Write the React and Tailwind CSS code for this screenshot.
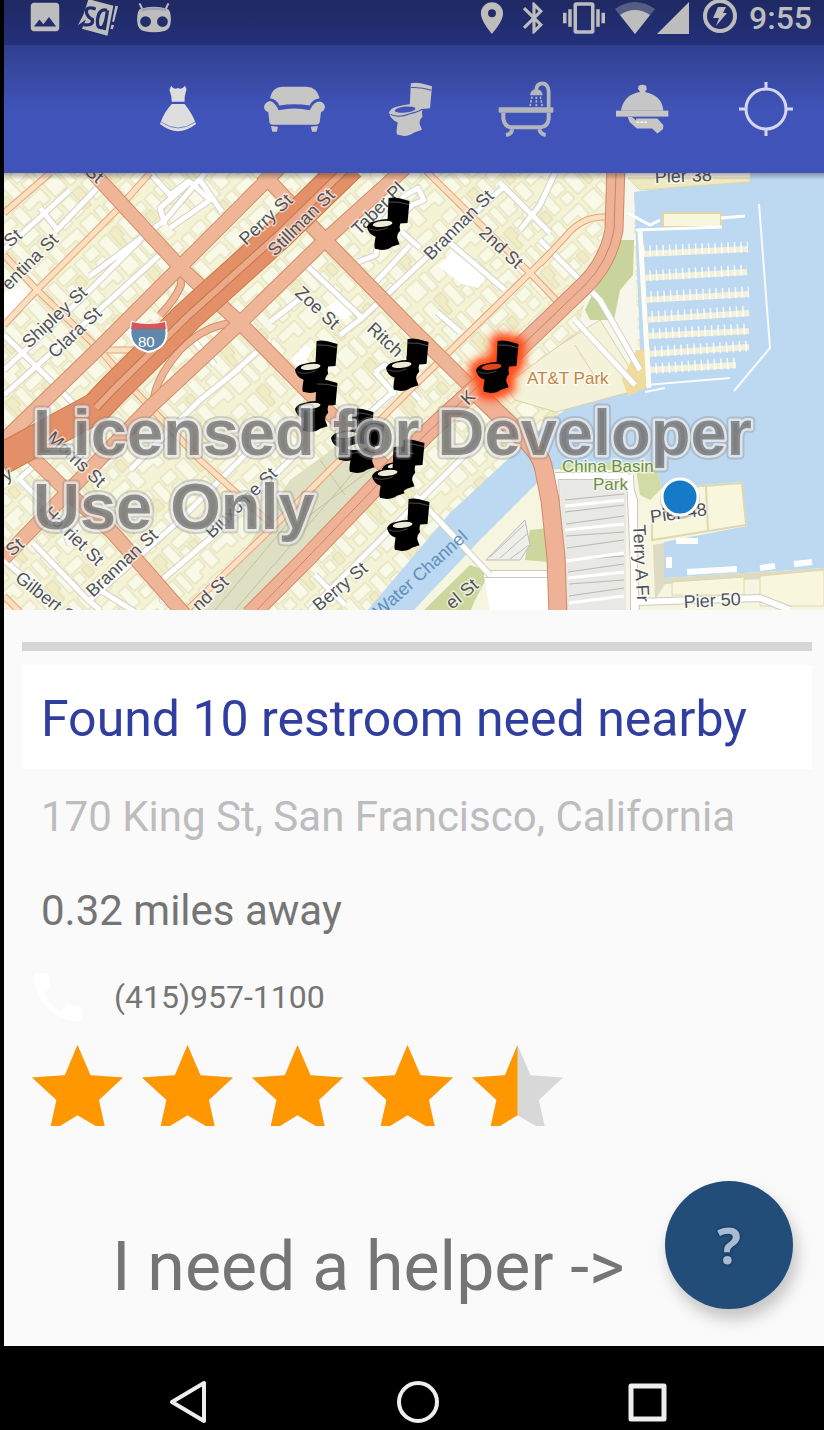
import { MdImage, MdLocationOn, MdBluetooth, MdVibration, MdPhone } from 'react-icons/md';

const TOILET =
  'M65 3Q80 0 98 4L128 12L122 78L100 80Q96 92 100 102Q90 112 91 124L98 142L75 150Q62 160 44 160L24 156Q20 150 26 120Q4 112 0 90Q6 78 20 74L45 68L62 66Z';

// Pines del mapa (esquina superior izquierda de cada uno)
const PINS = [
  { x: 367, y: 197 },
  { x: 295, y: 340 },
  { x: 386, y: 338 },
  { x: 295, y: 379 },
  { x: 331, y: 408 },
  { x: 342, y: 420 },
  { x: 382, y: 439 },
  { x: 372, y: 446 },
  { x: 387, y: 498 },
];

const STREET_LABELS = [
  { t: 'Perry St', x: 246, y: 246, r: -43 },
  { t: 'Stillman St', x: 275, y: 257, r: -45 },
  { t: 'Taber Pl', x: 359, y: 236, r: -45 },
  { t: 'Brannan St', x: 431, y: 261, r: -45 },
  { t: '2nd St', x: 478, y: 234, r: 43 },
  { t: 'Zoe St', x: 294, y: 294, r: 43 },
  { t: 'Ritch St', x: 366, y: 330, r: 43 },
  { t: 'Shipley St', x: 29, y: 349, r: -43 },
  { t: 'Clara St', x: 55, y: 359, r: -43 },
  { t: 'entina St', x: 9, y: 291, r: -45 },
  { t: 'St', x: 10, y: 248, r: -40 },
  { t: 'St', x: 84, y: 173, r: 40 },
  { t: 'Morris St', x: 46, y: 439, r: 43 },
  { t: 'Harriet St', x: 42, y: 514, r: 44 },
  { t: 'Gilbert St', x: 14, y: 580, r: 38 },
  { t: 'Brannan St', x: 93, y: 598, r: -43 },
  { t: 'Bluxome St', x: 212, y: 539, r: -44 },
  { t: 'nd St', x: 199, y: 612, r: -43 },
  { t: 'St', x: 12, y: 557, r: -40 },
  { t: 'y', x: 6, y: 482, r: -30 },
  { t: 'Berry St', x: 319, y: 612, r: -40 },
  { t: 'K', x: 468, y: 406, r: -45 },
  { t: 'el St', x: 452, y: 610, r: -40 },
  { t: 'Pier 38', x: 655, y: 183, r: -2 },
  { t: 'Pier 48', x: 651, y: 523, r: -8 },
  { t: 'Pier 50', x: 684, y: 608, r: -3 },
  { t: 'Terry A Fr', x: 633, y: 525, r: 87 },
];

const MINOR_STREETS = [
  'M4 250L70 190', 'M40 208L56 228', 'M55 232L100 185', 'M90 276L165 220L205 173', 'M4 370L80 300L140 240',
  'M4 395L75 332L165 250', 'M150 173L170 195L190 180', 'M165 225L160 208L190 182L210 200L170 228', 'M200 180L222 212',
  'M230 376L270 340', 'M270 322L305 295', 'M306 265L362 318L445 240L506 185', 'M333 235L360 210', 'M358 262L376 255L378 240L412 205L424 200L418 188L404 196L372 235',
  'M375 283L410 245', 'M340 335L362 318', 'M402 232L420 248', 'M437 312L460 332', 'M500 183L550 233', 'M450 243L505 290',
  'M240 368L200 400L130 470', 'M18 480L35 465M20 480L60 520L70 545', 'M33 543L88 600L100 610', 'M4 560L50 600', 'M90 600L180 520L260 440',
  'M168 586L162 600L185 612M162 580L220 530L300 450', 'M100 590L135 612', 'M375 372L385 365L420 400M375 372L395 395', 'M4 335L50 380L90 420', 'M180 325L215 365', 'M395 390L340 440',
  'M310 610L410 510L480 440', 'M315 575L345 605', 'M415 495L490 575', 'M555 173L540 205L520 230', 'M540 240L600 300L640 370', 'M575 320L635 385',
];

const LIGHT_ROADS = [
  'M4 213L50 173', 'M150 173L117 210L37 290L4 325', 'M4 255L37 290L100 350L130 385', 'M420 165L530 273L556 300', 'M550 253L530 273L410 390L270 530L185 612',
  'M606 217Q582 216 566 236L540 264', 'M132 388L200 460L272 525', 'M100 350L145 350', 'M4 596L20 612',
];

const MAJOR_ROADS = [
  'M86 165L180 267L240 323L303 387L337 420L385 467', 'M262 173L325 240L413 330L480 396', 'M30 455L73 497L113 533L185 615', 'M282 165L180 267L97 350L4 440',
  'M405 168L325 240L240 323L150 407L67 493L4 558',
];

const RAMPS = ['M180 267L181 285Q175 300 160 315', 'M245 323Q210 320 180 350Q150 385 154 410'];

function Toilet({ className, seat }) {
  return (
    <svg viewBox="0 0 128 160" className={className} aria-hidden="true">
      <path d={TOILET} fill="currentColor" />
      <path d="M66 16Q96 14 126 24" fill="none" stroke={seat} strokeWidth="3" />
      <ellipse cx="48" cy="82" rx="31" ry="9" fill={seat} transform="rotate(-6 46 82)" />
      <path d="M4 96Q30 108 62 94Q90 88 100 80" fill="none" stroke={seat} strokeWidth="3" />
    </svg>
  );
}

function Pin({ x, y, hot }) {
  return (
    <g transform={`translate(${x} ${y}) scale(0.332)`}>
      {hot && <path d={TOILET} fill="#ff4a12" stroke="#ff4a12" strokeWidth="44" strokeLinejoin="round" filter="url(#glow)" />}
      <path d={TOILET} fill="#000" />
      <path d="M66 15Q96 13 126 23" fill="none" stroke="#777" strokeWidth="2" />
      <ellipse cx="47" cy="81" rx="30" ry="9" fill={hot ? '#e2441a' : '#ecebd8'} transform="rotate(-6 47 81)" />
      <path d="M6 96Q30 106 62 93" fill="none" stroke="#666" strokeWidth="2" />
    </g>
  );
}

function StatusBar() {
  return (
    <div className="flex h-[45px] items-start justify-between bg-linear-to-b from-[#1f2962] to-[#24307a] pl-[26px] pr-3 text-[#bdbdbd]">
      <div className="flex h-[34px] items-center gap-[18px]">
        <MdImage className="-m-1 size-[38px]" />
        <svg viewBox="240 0 122 112" className="h-[37px] w-10" fill="currentColor" aria-hidden="true">
          <path d="M272 0L348 20L330 112L252 90L264 62L240 80L256 48Z" />
          <g fill="none" stroke="#212c6c" strokeWidth="10">
            <path d="M294 30Q262 20 266 42Q270 56 284 62Q288 82 256 78" />
            <path d="M328 34Q304 28 300 60Q296 92 314 86Q324 80 330 34L320 94" />
          </g>
          <path d="M354 20L362 22L350 70L344 68ZM342 78L350 80L346 92L339 90Z" />
        </svg>
        <svg viewBox="415 4 104 92" className="h-[31px] w-9" aria-hidden="true">
          <path d="M424 8L432 24M510 8L502 24" stroke="currentColor" strokeWidth="6" />
          <path d="M428 24Q467 12 506 24Q518 28 517 60Q516 86 498 90Q467 97 436 90Q418 86 417 60Q416 28 428 24Z" fill="currentColor" />
          <path d="M430 28Q467 20 504 28" fill="none" stroke="#9ea2b8" strokeWidth="8" />
          <circle cx="442" cy="62" r="16" fill="#222d6d" />
          <circle cx="492" cy="62" r="16" fill="#222d6d" />
        </svg>
      </div>
      <div className="flex h-9 items-center">
        <MdLocationOn className="h-[38px] w-[46px]" />
        <MdBluetooth className="h-[38px] w-[38px]" />
        <MdVibration className="h-[42px] w-[62px]" />
        <svg viewBox="0 0 40 34" className="w-10" fill="currentColor" aria-hidden="true">
          <path d="M0 8Q20 -6 40 8L20 33Z" opacity="0.35" />
          <path d="M5 14Q20 4 35 14L20 33Z" />
        </svg>
        <svg viewBox="0 0 40 34" className="w-10" fill="currentColor" aria-hidden="true">
          <path d="M34 1V33H2Z" />
        </svg>
        <svg viewBox="0 0 54 36" className="w-[54px]" aria-hidden="true">
          <circle cx="25" cy="16" r="15" fill="none" stroke="currentColor" strokeWidth="4" />
          <path d="M23 7H31L28 13H32L21 26L24 18H18Z" fill="currentColor" />
        </svg>
        <time className="text-[32px] font-medium leading-9">9:55</time>
      </div>
    </div>
  );
}

function ToolButton({ label, children }) {
  return (
    <button aria-label={label} className="flex h-full w-[116px] items-center justify-center text-[#c6c6c6]">
      {children}
    </button>
  );
}

function Toolbar() {
  return (
    <nav className="flex h-32 justify-end bg-linear-to-b from-[#30408f] via-[#4053b8] to-[#4053b8]">
      <ToolButton label="Clothes">
        <svg viewBox="480 257 110 146" className="h-12 w-9 text-[#dedede]" fill="currentColor" aria-hidden="true">
          <path d="M514 259Q522 272 535 266Q548 272 556 259L561 270Q554 290 555 308H516Q516 290 509 272Z" />
          <path d="M516 315H555Q580 346 590 376Q535 420 480 376Q492 340 516 315Z" />
          <path d="M484 370Q535 406 587 370" fill="none" stroke="#7885cb" strokeWidth="3" />
        </svg>
      </ToolButton>
      <ToolButton label="Shelter">
        <svg viewBox="792 258 184 140" className="h-[47px] w-[61px]" fill="currentColor" aria-hidden="true">
          <path d="M810 294Q816 260 848 259H920Q952 260 960 294Q936 298 930 316Q884 308 838 316Q830 296 810 294Z" />
          <path d="M810 302Q826 306 836 330Q884 320 930 330Q942 304 960 304Q976 308 976 322Q972 334 964 336L960 366Q958 374 948 374H820Q808 374 808 364L805 336Q792 332 792 320Q794 306 810 302Z" />
          <path d="M813 378L834 380L831 395H817ZM933 380L955 378L950 395H937Z" />
        </svg>
      </ToolButton>
      <ToolButton label="Restroom">
        <Toilet className="h-[54px] w-[43px]" seat="#4354b4" />
      </ToolButton>
      <ToolButton label="Shower">
        <svg viewBox="262 243 168 168" className="size-14 text-[#b4b6bd]" fill="none" stroke="currentColor" aria-hidden="true">
          <path d="M414 324V274Q412 250 394 250Q378 252 377 268" strokeWidth="11" />
          <path d="M358 286Q360 268 377 266Q394 268 396 286Z" fill="currentColor" stroke="none" />
          <path d="M364 290L358 320M377 290V320M389 290L395 320" strokeWidth="5" strokeDasharray="7 4" />
          <rect x="264" y="322" width="164" height="16" rx="3" fill="currentColor" stroke="none" />
          <path d="M278 338V356Q282 382 304 382H390Q412 380 414 356V338" strokeWidth="12" />
          <path d="M304 388Q304 402 286 405M386 388Q388 402 405 405" strokeWidth="12" />
        </svg>
      </ToolButton>
      <ToolButton label="Food">
        <svg viewBox="615 252 160 150" className="h-[50px] w-[53px]" fill="currentColor" aria-hidden="true">
          <path d="M684 257Q695 250 706 257L708 268L702 276Q754 286 758 332H630Q638 284 688 276L681 266Z" />
          <rect x="615" y="332" width="158" height="18" />
          <path d="M650 350L664 352L676 362V356H740L758 376L757 387L740 401L724 386H678L656 366Z" />
          <path d="M677 367H708" stroke="#fff" strokeWidth="5" strokeDasharray="8 4" />
        </svg>
      </ToolButton>
      <div className="ml-2">
        <ToolButton label="My location">
          <svg viewBox="0 0 54 54" className="size-[54px] text-[#d5d7f0]" fill="none" stroke="currentColor" strokeWidth="3" aria-hidden="true">
            <circle cx="27" cy="27" r="20" />
            <path d="M27 0V8M27 46V54M0 27H8M46 27H54" />
          </svg>
        </ToolButton>
      </div>
    </nav>
  );
}

function Roads({ paths, edge, fill, width }) {
  return (
    <g fill="none" strokeLinejoin="round">
      {paths.map((d) => <path key={d} d={d} stroke={edge} strokeWidth={width + 2} />)}
      {paths.map((d) => <path key={d} d={d} stroke={fill} strokeWidth={width} />)}
    </g>
  );
}

function CityMap() {
  return (
    <svg viewBox="4 173 820 437" className="block w-full" role="img" aria-label="Map" fontFamily="Liberation Sans, sans-serif">
      <defs>
        <pattern id="blocks" width="96" height="54" patternUnits="userSpaceOnUse" patternTransform="rotate(-43)">
          <rect width="96" height="54" fill="#f4f3d6" />
          <g fill="#f8f9e6" stroke="#e0dcb8" strokeWidth="1">
            <path d="M2 2H18V20H2ZM21 2H29V22H21ZM32 4H52V14H44V20H32ZM55 2H66V20H55ZM69 3H93V18H84V12H69Z" />
            <path d="M2 28H14V50H2ZM30 27H40V50H30ZM43 27H62V37H43ZM43 40H52V51H43ZM66 28H76V50H66ZM79 27H93V38H79ZM82 41H93V51H82Z" />
          </g>
          <path d="M17 28H27V40H23V50H17ZM55 40H63V51H55Z" fill="#f0ecc6" stroke="#dfdab2" />
        </pattern>
        <filter id="glow" x="-50%" y="-50%" width="200%" height="200%">
          <feGaussianBlur stdDeviation="13" />
        </filter>
        <linearGradient id="appbarShadow" x1="0" y1="0" x2="0" y2="1">
          <stop offset="0" stopColor="#000" stopOpacity="0.3" />
          <stop offset="1" stopColor="#000" stopOpacity="0" />
        </linearGradient>
      </defs>

      <rect x="4" y="173" width="820" height="437" fill="url(#blocks)" />
      <path d="M4 292L20 288L36 302L4 322ZM438 266L452 252L470 262L485 280L478 288L462 284ZM326 308L340 298L356 310L345 320ZM290 360L305 345L312 350L300 370Z" fill="#fff" />
      <path d="M205 612L290 480L345 440L385 478L255 612Z" fill="#dfdfc3" />
      <path d="M215 610L345 455M235 610L360 465M290 530L370 470M270 500L300 530M320 460L345 495" stroke="#c2c2a2" fill="none" />

      {/* Bahia y canal */}
      <path d="M634 192L750 178V173H824V610H640L655 560L650 462L550 470L415 612H366L450 513L550 420L568 408L625 390L642 385Z" fill="#bdd8f1" />
      <path d="M618 173H750V178L634 192V240L640 390L600 395L560 400Z" fill="#f6f6ea" />
      <path d="M618 240L634 240L633 275L620 290L614 320L590 320L585 310Z" fill="#c9d49c" />
      <path d="M636 192L750 180V173H824V400H642L636 240L665 232V218H636Z" fill="#bdd8f1" />
      <path d="M560 345L600 320L636 378L630 392L556 412L515 400L505 385Z" fill="#f4f3da" stroke="#d9d3a9" />
      <path d="M560 345L580 330L608 352M575 345L600 385" fill="none" stroke="#d9d3a9" />
      <path d="M636 350L646 350V388L628 396L622 380Z" fill="#efdc9c" />
      <path d="M628 178H750V182L640 190Z" fill="#efe9c0" stroke="#ddd6ad" />
      <rect x="663" y="213" width="58" height="14" fill="#f8f6dc" stroke="#e0d7a2" strokeWidth="2" />
      <path d="M628 213L650 225L660 220M636 230L722 227M721 218L745 216" fill="none" stroke="#fff" strokeWidth="3" />
      <path d="M640 230L649 388" stroke="#fdfdf5" strokeWidth="5" />
      <g stroke="#f3f1da" strokeWidth="6">
        <path d="M643 254L748 249M643 278L747 272M644 300L749 294M645 320L749 313M646 336L749 331M648 354L749 347M649 370L736 365" />
      </g>
      <g stroke="#fff" strokeWidth="11" strokeDasharray="1.5 5" opacity="0.85">
        <path d="M643 251L748 247M643 276L747 270M644 297L749 292M645 317L749 311M646 334L749 329M648 352L749 346M649 369L736 363" />
      </g>
      <path d="M646 385L730 378M759 204L770 348L734 391M645 392L665 388" fill="none" stroke="#f8fbff" strokeWidth="2" />

      {/* Mission Bay */}
      <path d="M546 470L655 462L662 488L742 482L747 526L664 542V578L824 568V612H412L480 540L546 474Z" fill="#f6f5df" />
      <path d="M560 464L655 462L662 488L650 500L640 495L636 470H560Z" fill="#d0dba5" />
      <path d="M664 489L742 483L746 525L652 540V520L664 515ZM706 487L708 531" fill="#f8f7de" stroke="#ddd8ae" strokeWidth="2" />
      <path d="M653 545L664 543V578L824 568V576L665 584L655 600Z" fill="#dddcc2" />
      <path d="M672 582L744 577V595H672ZM760 576L824 570V606H760Z" fill="#f8f7de" stroke="#ddd8ae" />
      <path d="M560 478H626V612H562Z" fill="#e8e8e4" />
      <path d="M565 500L624 494M565 512L624 505M566 524L624 516M566 536L624 532M567 548L624 540M568 560L624 556M568 572L624 564M569 584L624 580M569 596L624 588" stroke="#b9b9b3" strokeWidth="1" />
      <path d="M565 506L624 500M565 530L624 524M566 561L624 553M568 578L624 572M569 603L624 596" stroke="#fff" strokeWidth="3" />
      <path d="M530 530L548 528V562L525 560Z" fill="#ccd69d" />
      <path d="M422 612L470 565L490 572L475 600L470 612Z" fill="#ccd79e" />
      <path d="M484 576H552V612H490Z" fill="#fff" />
      <path d="M486 560L525 520L530 545L520 560Z" fill="#eeeeea" stroke="#bbb" />
      <path d="M490 557L524 525M500 558L527 534M510 559L529 545" stroke="#bbb" />
      <path d="M555 478L560 612M630 475L636 612M555 476H626L634 500V612M484 574H552M636 602L760 598L790 610" fill="none" stroke="#c9c9c4" strokeWidth="8" />
      <path d="M555 478L560 612M630 475L636 612M555 476H626L634 500V612M484 574H552M636 602L760 598L790 610" fill="none" stroke="#fff" strokeWidth="6" />
      <path d="M687 572L737 569M760 568L775 566M794 564L812 562M669 557V568M676 541H698" stroke="#fff" strokeWidth="6" />

      <Roads paths={MINOR_STREETS} edge="#d3d3c8" fill="#fff" width={5} />
      <Roads paths={LIGHT_ROADS} edge="#e8a27c" fill="#fbe0c0" width={5} />
      <Roads paths={RAMPS} edge="#d28e6b" fill="#efb597" width={6} />
      <Roads paths={MAJOR_ROADS} edge="#d28e6b" fill="#efb597" width={13} />
      <Roads
        paths={['M616 165L614 230Q608 262 585 285L510 357L427 433L307 558L250 615', 'M480 396L520 435Q541 452 544 470L550 500L556 557L558 615']}
        edge="#cf8a6a"
        fill="#efb296"
        width={17}
      />
      <path d="M616 173L614 230Q608 262 585 285L510 357L427 433L307 558L255 612" fill="none" stroke="#c98468" />
      <Roads paths={['M350 165L280 233L187 317L113 390L96 408L33 442L0 460']} edge="#c9764d" fill="#e38f68" width={30} />
      <path d="M350 165L280 233L187 317L113 390L96 408" fill="none" stroke="#c4734c" strokeWidth="8" />
      <path d="M350 165L280 233L187 317L113 390L96 408" fill="none" stroke="#ebaa86" strokeWidth="6" />

      {/* Escudo I-80 */}
      <path d="M132 322Q148 326 165 322Q172 348 148 352Q125 346 132 322Z" fill="#6088ad" stroke="#fff" strokeWidth="2" />
      <path d="M132 322Q148 326 165 322L166 329H131Z" fill="#d7565b" />
      <text x="138" y="347" fontSize="15" fill="#fff">80</text>

      <g fontSize="18" fill="#4e5358" stroke="#fff" strokeOpacity="0.6" strokeWidth="3" paintOrder="stroke">
        {STREET_LABELS.map((l) => (
          <text key={`${l.t}-${l.x}`} transform={`translate(${l.x} ${l.y}) rotate(${l.r})`}>{l.t}</text>
        ))}
      </g>
      <text transform="translate(380 618) rotate(-42)" fontSize="18" fill="#5f8fbd">Water Channel</text>
      <g fontSize="17" stroke="#fff" strokeOpacity="0.6" strokeWidth="3" paintOrder="stroke">
        <text x="527" y="384" fill="#c28547">AT&amp;T Park</text>
        <text x="562" y="472" fill="#6d8f45">China Basin</text>
        <text x="593" y="490" fill="#6d8f45">Park</text>
      </g>

      <Pin x={476} y={340} hot />
      {PINS.map((p) => <Pin key={`${p.x}-${p.y}`} {...p} />)}

      <circle cx="680" cy="499" r="20" fill="#000" opacity="0.2" />
      <circle cx="680" cy="497" r="18" fill="#167ac6" stroke="#fff" strokeWidth="3" />

      {/* Marca de agua */}
      <g fontSize="65" fontWeight="700">
        <g fill="none" stroke="#8a8a8a" strokeOpacity="0.35" strokeWidth="9" strokeLinejoin="round">
          <text x="33" y="455">Licensed for Developer</text>
          <text x="33" y="529">Use Only</text>
        </g>
        <g fill="#6c6c6c" fillOpacity="0.75" stroke="#fff" strokeOpacity="0.6" strokeWidth="5" strokeLinejoin="round" paintOrder="stroke">
          <text x="33" y="455">Licensed for Developer</text>
          <text x="33" y="529">Use Only</text>
        </g>
      </g>
      <rect x="4" y="173" width="820" height="7" fill="url(#appbarShadow)" />
    </svg>
  );
}

const STAR = 'M83 384L169 377L202 287L236 377L321 384L258 451L273 528H250L202 496L156 528H132L147 451Z';

function Rating({ value }) {
  return (
    <div role="img" aria-label={`${value} out of 5 stars`} className="flex gap-[19px]">
      {[0, 1, 2, 3, 4].map((i) => {
        const part = Math.max(0, Math.min(1, value - i));
        return (
          <svg key={i} viewBox="83 287 238 241" className="h-[81px] w-[91px]" preserveAspectRatio="none">
            <clipPath id={`star-${i}`}>
              <rect x="83" y="287" width={238 * part} height="241" />
            </clipPath>
            <path d={STAR} fill="#d8d8d8" />
            <path d={STAR} fill="#ff9800" clipPath={`url(#star-${i})`} />
          </svg>
        );
      })}
    </div>
  );
}

function Details() {
  return (
    <main className="bg-[#fafafa] pl-[18px] pr-3 pt-8 text-[#757575]">
      <div className="h-[9px] bg-[#d6d6d6]" />
      <h1 className="mt-[14px] bg-white px-[19px] pt-1 text-[50px] leading-[100px] text-[#303f9f]">
        Found 10 restroom need nearby
      </h1>
      <p className="mt-5 px-[19px] text-[42px] leading-14 text-[#bdbdbd]">170 King St, San Francisco, California</p>
      <p className="mt-[38px] px-[19px] text-[42px] leading-14">0.32 miles away</p>
      <a href="tel:4159571100" className="mt-7 flex h-[60px] items-center pl-1">
        <MdPhone className="size-16 text-white" />
        <span className="ml-6 text-[32px] leading-10">(415)957-1100</span>
      </a>
      <div className="mt-[18px] pl-[10px]">
        <Rating value={4.5} />
      </div>
      <div className="mt-[55px] flex h-[165px] items-start justify-between pl-[90px]">
        <p className="mt-[46px] text-[68px] leading-[80px]">I need a helper -&gt;</p>
        <button
          aria-label="Get help"
          className="mr-[19px] size-32 shrink-0 rounded-full bg-[#224d78] font-['Noto_Sans'] text-[50px] font-bold text-[#a9bbd0] shadow-[4px_10px_16px_rgba(0,0,0,0.22)] [text-shadow:0_0_3px_#0c2340]"
        >
          ?
        </button>
      </div>
    </main>
  );
}

function SystemNav() {
  const button = 'flex w-10 items-center justify-center text-[#eeeeee]';
  return (
    <footer className="flex h-[84px] items-center justify-between bg-black pl-[164px] pr-[157px] pt-7">
      <button aria-label="Back" className={button}>
        <svg viewBox="0 0 40 44" className="w-10" fill="none" stroke="currentColor" strokeWidth="4" strokeLinejoin="round">
          <path d="M36 3V41L4 22Z" />
        </svg>
      </button>
      <button aria-label="Home" className={button}>
        <svg viewBox="0 0 44 44" className="w-11 shrink-0" fill="none" stroke="currentColor" strokeWidth="4">
          <circle cx="22" cy="22" r="19" />
        </svg>
      </button>
      <button aria-label="Recents" className={button}>
        <svg viewBox="0 0 40 40" className="w-10" fill="none" stroke="currentColor" strokeWidth="5" strokeLinejoin="round">
          <rect x="4" y="4" width="33" height="33" />
        </svg>
      </button>
    </footer>
  );
}

export default function App() {
  return (
    <div className="border-l-4 border-black font-[Roboto,sans-serif]">
      <StatusBar />
      <Toolbar />
      <CityMap />
      <Details />
      <SystemNav />
    </div>
  );
}
